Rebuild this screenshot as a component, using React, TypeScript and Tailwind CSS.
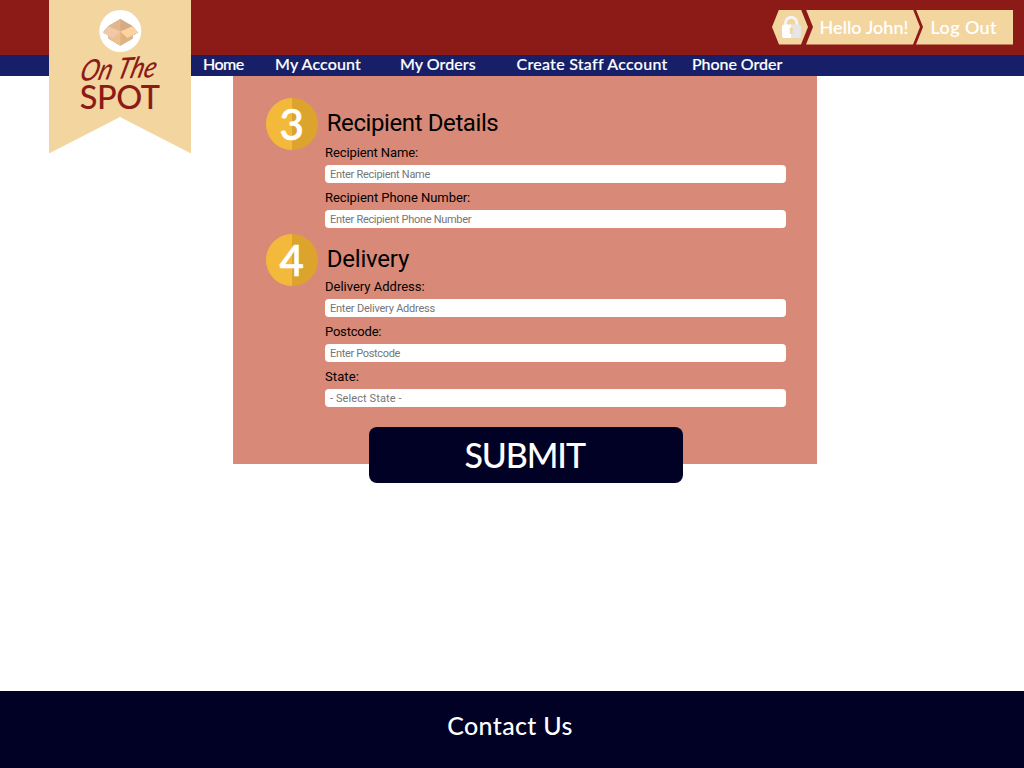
import React from "react";

const lato = "font-['Lato',sans-serif] font-medium whitespace-nowrap";
const roboto = "font-['Roboto',sans-serif] whitespace-nowrap";

function Logo() {
  return (
    <a href="#" className="absolute left-[48.7px] top-0 z-10 block h-[154px] w-[142px] text-[#8c1b17]">
      <svg viewBox="0 0 142 154" className="absolute inset-0 h-full w-full">
        <path d="M0 0H142V153.5L71 117L0 153.5Z" fill="#f3d5a0" />
        <circle cx="71.3" cy="31" r="21" fill="#fff" />
        <path d="M71.3 19.2L83.5 26.3L88.7 32.5L83.5 35.5V38.5L71.3 45.5L59.5 38.5V35.5L54.2 32.3L59.3 26.3Z" fill="#ebc08f" stroke="#a9a9a9" strokeWidth=".9" strokeDasharray="1 .7" />
        <path d="M71.3 19.2L59.3 26.3L71.3 32.5Z" fill="#e2b78a" />
        <path d="M71.3 19.2L83.5 26.3L71.3 32.5Z" fill="#d6aa82" />
        <path d="M71.3 31L59.5 37V38.5L71.3 45.5Z" fill="#edc18d" />
        <path d="M71.3 31L83.5 37V38.5L71.3 45.5Z" fill="#e1b27f" />
        <path d="M59.3 26.3L71.3 31.5L64 38L54.5 32.5Z" fill="#f2c8ab" />
        <path d="M83.5 26.3L71.3 31.5L78.5 38L88.5 32.5Z" fill="#fed39c" />
      </svg>
      <div className="relative flex flex-col items-center pt-[56px]">
        <svg viewBox="0 0 90 28" className="h-7 w-[90px] overflow-visible">
          <text x="0" y="0" textLength="76" lengthAdjust="spacingAndGlyphs" transform="translate(3.5 25) rotate(-3) skewX(-18)" fontFamily="Lato" fontStyle="italic" fontWeight="500" fontSize="29" fill="#8c1b17">On The</text>
        </svg>
        <span className="font-['Lato',sans-serif] text-[32.5px] font-medium leading-[26px] tracking-[-0.5px]">SPOT</span>
      </div>
    </a>
  );
}

function Lock() {
  return (
    <svg viewBox="0 0 20 22" className="ml-[8.5px] h-[22px] w-5">
      <path d="M4.5 10V7A5.7 5.7 0 0 1 15.9 7V10" fill="none" stroke="#f5f5f5" strokeWidth="2.9" />
      <path d="M3 8.5H10.5V22H3A2 2 0 0 1 1 20V10.5A2 2 0 0 1 3 8.5Z" fill="#fff" />
      <path d="M10.2 8.5H18A2 2 0 0 1 20 10.5V20A2 2 0 0 1 18 22H10.2Z" fill="#e6e6e6" />
      <path d="M10.3 11.5A1.8 1.8 0 0 1 11.3 14.8L11.8 18H8.8L9.3 14.8A1.8 1.8 0 0 1 10.3 11.5Z" fill="#f3d5a0" />
    </svg>
  );
}

function AccountBar() {
  return (
    <div className="flex h-[35px] text-lg leading-[34px] text-white [-webkit-text-stroke:0.15px]">
      <div className="flex w-[36px] items-center bg-[#f3d5a0] [clip-path:polygon(7px_0,29px_0,36px_50%,29px_100%,7px_100%,0_50%)]">
        <Lock />
      </div>
      <div className="-ml-[3px] w-[115px] bg-[#f3d5a0] pl-[14.5px] [clip-path:polygon(1px_0,108px_0,115px_50%,108px_100%,1px_100%,8px_50%)]">
        <span className={`${lato} tracking-[0.05px]`}>Hello John!</span>
      </div>
      <div className="-ml-[4px] w-[97px] bg-[#f3d5a0] pl-[14.5px] [clip-path:polygon(0_0,100%_0,100%_100%,0_100%,7px_50%)]">
        <span className={`${lato} tracking-[0.4px]`}>Log Out</span>
      </div>
    </div>
  );
}

function Step({ n, title, className }: { n: string; title: string; className: string }) {
  return (
    <div className="flex h-[52px] items-center">
      <div className="flex h-[52px] w-[52px] items-center justify-center rounded-full bg-[linear-gradient(90deg,#f3b93a_50%,#dca32d_50%)]">
        <span className={`${lato} text-[42px] leading-[52px] text-white [-webkit-text-stroke:0.7px]`}>{n}</span>
      </div>
      <h2 className={`${roboto} ml-[9px] text-2xl leading-7 text-black ${className}`}>{title}</h2>
    </div>
  );
}

function Field({ label, hint, labelClass, hintClass }: { label: string; hint: string; labelClass: string; hintClass: string }) {
  return (
    <div className="ml-[59.3px] flex h-[44.9px] flex-col">
      <label className={`${roboto} flex h-[24px] items-center text-[13px] leading-4 text-black ${labelClass}`}>{label}</label>
      <div className={`${roboto} flex h-[18px] w-[461px] items-center rounded-[4px] bg-white pl-[5px] pt-px text-[11px] leading-none text-[#767676] ${hintClass}`}>{hint}</div>
    </div>
  );
}

export default function App() {
  return (
    <div className="relative flex h-screen w-full flex-col overflow-hidden bg-white">
      <Logo />
      <header className="flex h-[54.5px] shrink-0 justify-end bg-[#8c1b17] pr-[11px] pt-[9.5px]">
        <AccountBar />
      </header>
      <nav className={`${lato} flex h-[21px] shrink-0 bg-[#171f69] pl-[203px] text-base leading-[18px] text-white [-webkit-text-stroke:0.15px]`}>
        <a className="w-[72px] tracking-[-0.5px]">Home</a>
        <a className="w-[125px] tracking-[0.15px]">My Account</a>
        <a className="w-[116.5px] tracking-[0.05px]">My Orders</a>
        <a className="w-[175.5px] tracking-[0.27px]">Create Staff Account</a>
        <a className="tracking-[-0.05px]">Phone Order</a>
      </nav>
      <main className="ml-[233px] flex h-[388px] w-[584px] shrink-0 flex-col bg-[#d88977] pl-[32.7px] pt-[22.7px]">
        <Step n="3" title="Recipient Details" className="-mt-[1.5px] tracking-[-0.4px]" />
        <div className="-mt-[9px]">
          <Field label="Recipient Name:" hint="Enter Recipient Name" labelClass="tracking-[-0.1px]" hintClass="tracking-[-0.28px]" />
          <Field label="Recipient Phone Number:" hint="Enter Recipient Phone Number" labelClass="tracking-[-0.06px]" hintClass="tracking-[-0.3px]" />
        </div>
        <div className="mt-[3px]">
          <Step n="4" title="Delivery" className="-mt-[1.5px] tracking-[-0.2px]" />
        </div>
        <div className="-mt-[10.7px]">
          <Field label="Delivery Address:" hint="Enter Delivery Address" labelClass="" hintClass="tracking-[-0.22px]" />
          <Field label="Postcode:" hint="Enter Postcode" labelClass="tracking-[-0.2px]" hintClass="tracking-[-0.33px]" />
          <Field label="State:" hint="- Select State -" labelClass="tracking-[0.1px]" hintClass="tracking-[0.1px]" />
        </div>
        <button className={`${lato} ml-[103px] mt-[16.7px] h-[56.5px] w-[314px] shrink-0 rounded-[8px] bg-[#000125] pr-[2px] text-[34px] leading-none tracking-[-1.1px] text-white`}>SUBMIT</button>
      </main>
      <footer className={`${lato} mt-auto flex h-[76.7px] shrink-0 justify-center bg-[#000125] pr-[4px] pt-[18px] text-[25px] leading-8 tracking-[0.35px] text-white`}>Contact Us</footer>
    </div>
  );
}
